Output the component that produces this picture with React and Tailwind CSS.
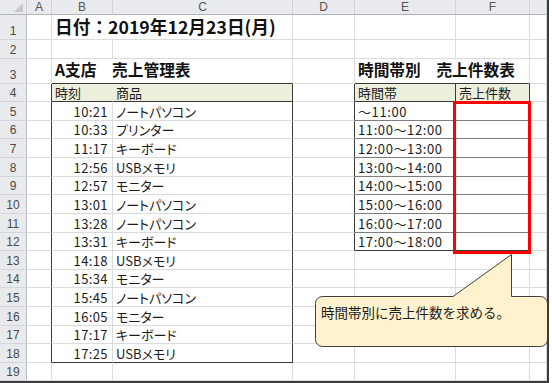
import React from "react";

const SALES = [
  ["10:21", "ノートパソコン"],
  ["10:33", "プリンター"],
  ["11:17", "キーボード"],
  ["12:56", "USBメモリ"],
  ["12:57", "モニター"],
  ["13:01", "ノートパソコン"],
  ["13:28", "ノートパソコン"],
  ["13:31", "キーボード"],
  ["14:18", "USBメモリ"],
  ["15:34", "モニター"],
  ["15:45", "ノートパソコン"],
  ["16:05", "モニター"],
  ["17:17", "キーボード"],
  ["17:25", "USBメモリ"],
];

const SLOTS = [
  "～11:00",
  "11:00～12:00",
  "12:00～13:00",
  "13:00～14:00",
  "14:00～15:00",
  "15:00～16:00",
  "16:00～17:00",
  "17:00～18:00",
];

const LETTERS = ["A", "B", "C", "D", "E", "F", ""];

const R_DARK = "border-r-[#3a3a3a]";
const R_FILL = "border-r-[#ebefdc]";
const R_GRID = "border-r-[#dadcdd]";
const B_DARK = "border-b-[#3a3a3a]";
const B_HAIR = "border-b-[#7d7d7d]";
const B_GRID = "border-b-[#dadcdd]";

// edge colours: table borders are drawn on the cell to the left / above
function rightEdge(r, c) {
  if (r === 4 && c === 1) return R_FILL;
  if (r >= 4 && r <= 18 && (c === 0 || c === 2)) return R_DARK;
  if (r >= 4 && r <= 12 && (c === 3 || c === 4 || c === 5)) return R_DARK;
  return R_GRID;
}

function bottomEdge(r, c) {
  if ((r === 3 || r === 4 || r === 18) && (c === 1 || c === 2)) return B_DARK;
  if ((r === 3 || r === 4 || r === 12) && (c === 4 || c === 5)) return B_DARK;
  if (r >= 5 && r <= 11 && (c === 4 || c === 5)) return B_HAIR;
  return B_GRID;
}

function cellsFor(r) {
  const cells = [];
  for (let c = 0; c < 7; c++) {
    let span = 1;
    let content = null;
    let kind = "text";
    let fill = false;
    if (r === 1 && c === 1) {
      span = 2;
      content = "日付：2019年12月23日(月)";
      kind = "title1";
    } else if (r === 3 && c === 1) {
      span = 2;
      content = "A支店　売上管理表";
      kind = "title3";
    } else if (r === 3 && c === 4) {
      span = 2;
      content = "時間帯別　売上件数表";
      kind = "title3";
    } else if (r === 4 && c >= 1 && c <= 5 && c !== 3) {
      fill = true;
      content = { 1: "時刻", 2: "商品", 4: "時間帯", 5: "売上件数" }[c];
    } else if (r >= 5 && r <= 18 && c === 1) {
      content = SALES[r - 5][0];
      kind = "time";
    } else if (r >= 5 && r <= 18 && c === 2) {
      content = SALES[r - 5][1];
      kind = "item";
    } else if (r >= 5 && r <= 12 && c === 4) {
      content = SLOTS[r - 5];
      kind = "slot";
    }
    cells.push({ c, span, content, kind, fill });
    c += span - 1;
  }
  return cells;
}

function SheetCell({ r, cell }) {
  const last = cell.c + cell.span - 1;
  const edges = `${rightEdge(r, last)} ${bottomEdge(r, cell.c)}`;
  const span = cell.span === 2 ? "col-span-2" : "";
  const bg = cell.fill ? "bg-[#ebefdc]" : "";
  let inner = "items-end pb-[2px] pl-[3px] text-[13px]";
  if (cell.kind === "title1")
    inner = "items-end pb-[3px] pl-[3px] text-[17.7px] font-bold text-[#111]";
  if (cell.kind === "title3")
    inner = "items-end pb-[5px] pl-[3px] text-[15.7px] font-bold text-[#111]";
  if (cell.kind === "time")
    inner = "items-end justify-end pb-[2px] pr-[4px] text-[13px] tracking-[0.4px]";
  if (cell.kind === "item")
    inner = "items-end pb-[2px] pl-[3px] text-[13px] [font-feature-settings:'palt']";
  if (cell.kind === "slot")
    inner = "items-end pb-[2px] pl-[3px] text-[13px] tracking-[0.6px]";
  return (
    <div
      className={`flex overflow-visible whitespace-nowrap leading-none border-r border-b text-[#1c1c1c] ${edges} ${span} ${bg} ${inner}`}
    >
      {cell.content}
    </div>
  );
}

function RowHeader({ n }) {
  return (
    <div className="flex items-end justify-center pb-[2px] bg-[#e8eaed] border-r border-b border-r-[#b8bdc4] border-b-[#d2d5da] text-[12px] leading-none text-[#4a4a4a] font-['Liberation_Sans',sans-serif]">
      {n}
    </div>
  );
}

export default function App() {
  const rows = Array.from({ length: 19 }, (_, i) => i + 1);
  return (
    <div className="w-[552px] h-[383px] bg-white">
      <div className="relative w-[549px] h-[383px] border-r-2 border-b-2 border-[#3c3c3c] overflow-hidden font-['Noto_Sans_CJK_JP',sans-serif]">
        <div className="grid grid-cols-[27px_25px_61px_180px_62px_101px_74px_17px] grid-rows-[15px_25px_19px_25px_18px_19px_18px_19px_19px_18px_19px_19px_18px_19px_18px_19px_19px_18px_19px_18px]">
          {/* select-all corner with its small triangle */}
          <div className="flex items-end justify-end pr-[3px] pb-[2px] bg-[#e8eaed] border-r border-b border-r-[#c9cdd3] border-b-[#aeb4bc]">
            <svg width="9" height="9" viewBox="0 0 9 9">
              <path d="M9 0 L9 9 L0 9 Z" fill="#c4c8ce" />
            </svg>
          </div>
          {LETTERS.map((l, i) => (
            <div
              key={i}
              className="flex items-center justify-center bg-[#e8eaed] border-r border-b border-r-[#cfd3d8] border-b-[#aeb4bc] text-[12px] leading-none text-[#555] font-['Liberation_Sans',sans-serif]"
            >
              {l}
            </div>
          ))}

          {rows.map((r) => (
            <React.Fragment key={r}>
              <RowHeader n={r} />
              {cellsFor(r).map((cell) => (
                <SheetCell key={cell.c} r={r} cell={cell} />
              ))}
            </React.Fragment>
          ))}
        </div>

        {/* highlight around the empty count column */}
        <div className="absolute left-[453px] top-[101px] w-[78px] h-[153px] border-[3px] border-[#ff0000] pointer-events-none" />

        {/* speech bubble */}
        <svg
          className="absolute left-0 top-0 pointer-events-none"
          width="552"
          height="383"
          viewBox="0 0 552 383"
        >
          <path
            d="M322.5 296.5 L453 296.5 L511.5 254.5 L511.5 296.5 L540.5 296.5 A7 7 0 0 1 547.5 303.5 L547.5 339.5 A7 7 0 0 1 540.5 346.5 L322.5 346.5 A7 7 0 0 1 315.5 339.5 L315.5 303.5 A7 7 0 0 1 322.5 296.5 Z"
            fill="#fff2cc"
            stroke="#3f3f3f"
            strokeWidth="1"
          />
        </svg>
        <div className="absolute left-[321px] top-[306px] text-[13.5px] leading-none text-[#1c1c1c] whitespace-nowrap">
          時間帯別に売上件数を求める。
        </div>
      </div>
    </div>
  );
}
